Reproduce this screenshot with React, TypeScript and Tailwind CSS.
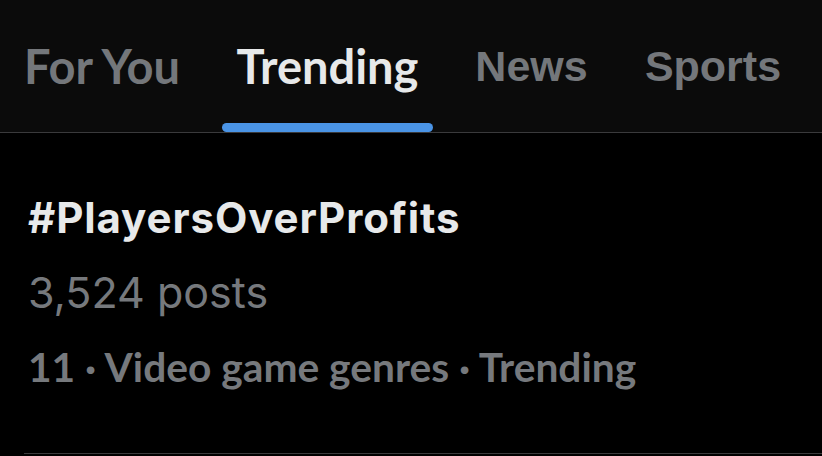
import React from 'react';

const tabs = [
    { label: 'For You', active: false, width: 'w-[182px]', font: 'Lato, sans-serif', size: 'text-[47px]' },
    { label: 'Trending', active: true, width: 'w-[211px]', font: 'Lato, sans-serif', size: 'text-[47px]' },
    { label: 'News', active: false, width: 'w-[139px]', font: '"Liberation Sans", Arial, sans-serif', size: 'text-[43px]' },
    { label: 'Sports', active: false, width: 'w-[166px]', font: '"Liberation Sans", Arial, sans-serif', size: 'text-[43px]' },
];

export default function App() {
    return (
        <div className="w-[822px] h-[456px] bg-black overflow-hidden" style={{ fontFamily: 'Lato, "Open Sans", sans-serif' }}>
            <div className="h-[133px] bg-[#0b0b0b] border-b border-[#3a3a3c] flex items-stretch pl-[11px] gap-[29px]">
                {tabs.map((tab) => (
                    <div key={tab.label} className={`relative flex items-center justify-center ${tab.width}`}>
                        <span
                            className={`${tab.size} font-bold leading-none ${tab.active ? 'text-[#e7e9ea]' : 'text-[#74777b]'}`}
                            style={{ fontFamily: tab.font }}
                        >
                            {tab.label}
                        </span>
                        {tab.active && (
                            <div className="absolute bottom-0 left-0 right-0 h-[9px] rounded-full bg-[#4a94e6]" />
                        )}
                    </div>
                ))}
            </div>
            <div className="pt-[64px]">
                <div className="pl-[28px]">
                    <div className="text-[42px] font-bold text-[#e7e9ea] leading-none tracking-[0.9px]" style={{ fontFamily: 'Inter, sans-serif' }}>
                        #PlayersOverProfits
                    </div>
                    <div className="text-[43px] text-[#76797d] leading-none mt-[32px]" style={{ fontFamily: 'Inter, sans-serif' }}>
                        3,524 posts
                    </div>
                    <div className="text-[40.7px] font-bold text-[#76797d] leading-none mt-[33px]">
                        11 · Video game genres · Trending
                    </div>
                </div>
                <div className="ml-[24px] mt-[65px] h-px bg-[#3a3a3c]" />
            </div>
        </div>
    );
}
